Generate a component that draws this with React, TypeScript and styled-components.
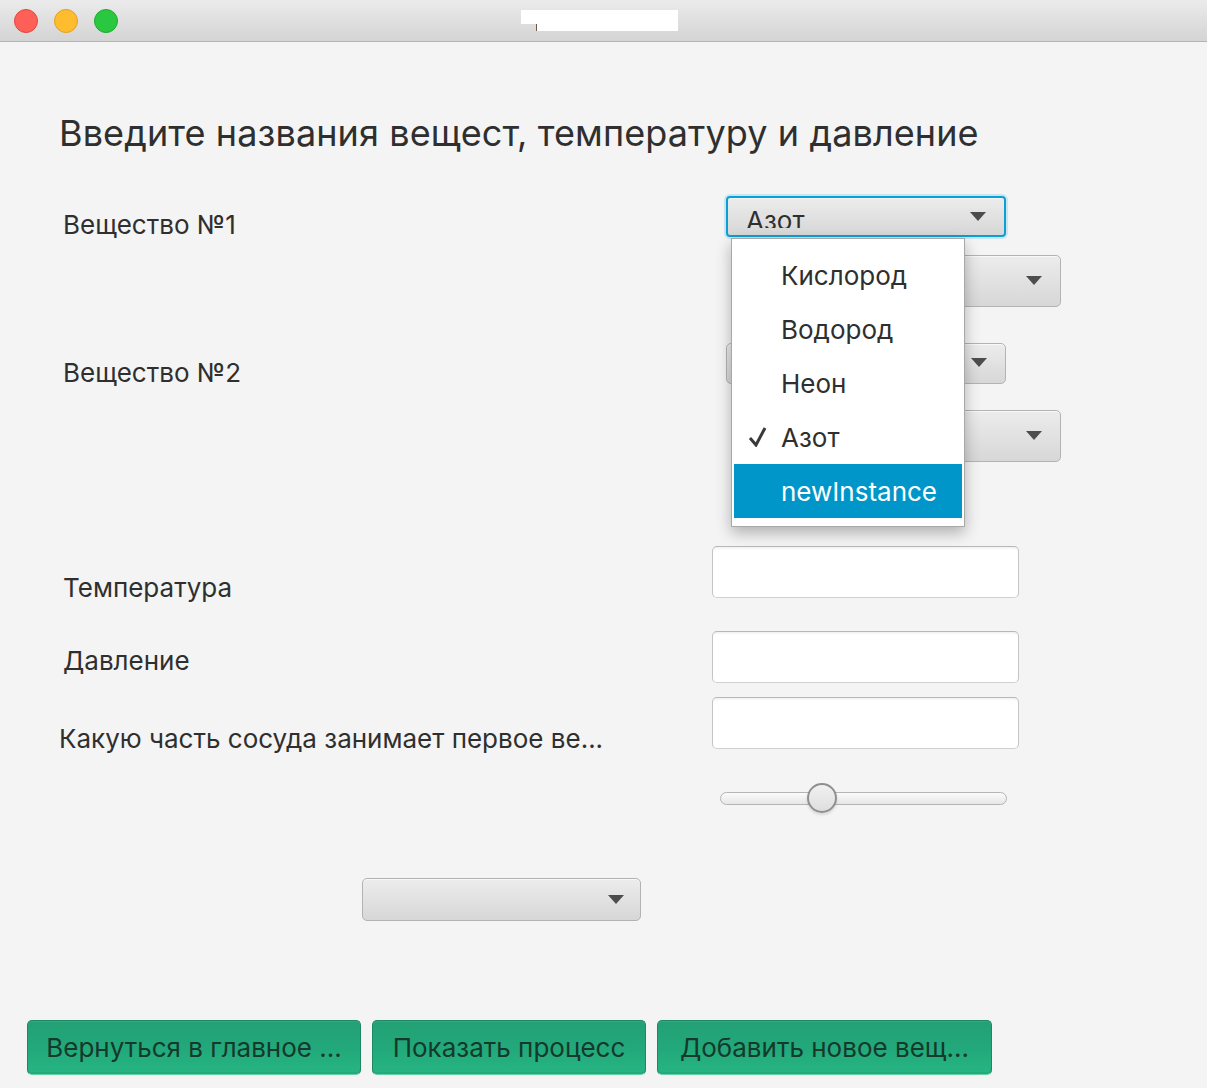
import React from "react";
import styled, { createGlobalStyle, css } from "styled-components";

const Global = createGlobalStyle`
  html, body { margin: 0; padding: 0; background: #f4f4f4; }
  body { font-family: Inter, "Noto Sans", "Liberation Sans", sans-serif; color: #333; }
  * { box-sizing: border-box; }
`;

const Window = styled.div`
  width: 1207px;
  height: 1088px;
  display: flex;
  flex-direction: column;
  background: #f4f4f4;
  overflow: hidden;
`;

const TitleBar = styled.div`
  height: 42px;
  flex: none;
  display: flex;
  align-items: center;
  padding-left: 14px;
  gap: 16px;
  background: linear-gradient(#ebebeb, #d4d4d4);
  border-bottom: 1px solid #b4b4b4;
  position: relative;
`;

const Light = styled.span<{ $c: string; $b: string }>`
  width: 24px;
  height: 24px;
  border-radius: 50%;
  background: ${(p) => p.$c};
  border: 1px solid ${(p) => p.$b};
`;

const TitleMask = styled.div`
  position: absolute;
  left: 536px;
  top: 10px;
  width: 142px;
  height: 21px;
  background: #fff;
  &::before {
    content: "";
    position: absolute;
    left: -15px;
    top: 0;
    width: 15px;
    height: 14px;
    background: #fff;
  }
  &::after {
    content: "";
    position: absolute;
    left: 0;
    top: 14px;
    width: 1px;
    height: 7px;
    background: #6b5a4a;
  }
`;

const Content = styled.div`
  flex: 1;
  display: flex;
  flex-direction: column;
  padding-left: 59px;
  position: relative;
`;

const Heading = styled.h1`
  margin: 69px 0 0 0;
  font-size: 36px;
  line-height: 44px;
  font-weight: 400;
  color: #2f2f2f;
  letter-spacing: 0.1px;
`;

const Row = styled.div<{ $gap: number }>`
  display: flex;
  align-items: flex-start;
  margin-top: ${(p) => p.$gap}px;
`;

const Label = styled.div<{ $top: number; $shift?: number }>`
  width: 653px;
  flex: none;
  padding-top: ${(p) => p.$top}px;
  padding-left: ${(p) => p.$shift ?? 4}px;
  font-size: 26px;
  line-height: 30px;
  color: #2f2f2f;
  white-space: nowrap;
`;

const Stack = styled.div<{ $gap: number }>`
  display: flex;
  flex-direction: column;
  align-items: flex-start;
  gap: ${(p) => p.$gap}px;
  position: relative;
`;

const comboBase = css`
  display: flex;
  align-items: flex-start;
  justify-content: space-between;
  border-radius: 5px;
  background: linear-gradient(#ececec, #d7d7d7);
  border: 1px solid #b3b3b3;
  box-shadow: inset 0 1px 0 #f8f8f8;
  position: relative;
  overflow: hidden;
`;

const Combo = styled.div<{ $w: number; $h: number; $indent?: number; $focused?: boolean }>`
  ${comboBase};
  width: ${(p) => p.$w}px;
  height: ${(p) => p.$h}px;
  margin-left: ${(p) => p.$indent ?? 0}px;
  padding-right: 18px;
  ${(p) =>
    p.$focused &&
    css`
      border: 2px solid #0aa0d6;
      box-shadow: 0 0 0 2px rgba(10, 160, 214, 0.18), inset 0 1px 0 #f3f3f3;
      border-radius: 4px;
    `}
`;

const ComboValue = styled.span`
  display: block;
  height: 28px;
  overflow: hidden;
  padding-left: 18px;
  margin-top: 2px;
  font-size: 26px;
  line-height: 42px;
  color: #2f2f2f;
`;

const Arrow = styled.span<{ $mt: number }>`
  width: 0;
  height: 0;
  margin-top: ${(p) => p.$mt}px;
  margin-left: auto;
  border-left: 8px solid transparent;
  border-right: 8px solid transparent;
  border-top: 9px solid #4d4d4d;
`;

const Popup = styled.div`
  position: absolute;
  left: 19px;
  top: 42px;
  width: 234px;
  padding: 9px 2px 8px 2px;
  background: #fff;
  border: 1px solid #a8a8a8;
  box-shadow: 0 6px 14px rgba(0, 0, 0, 0.28);
  z-index: 5;
  display: flex;
  flex-direction: column;
`;

const Item = styled.div<{ $active?: boolean }>`
  height: 54px;
  display: flex;
  align-items: center;
  padding-left: 47px;
  position: relative;
  font-size: 26px;
  color: ${(p) => (p.$active ? "#ffffff" : "#2f2f2f")};
  background: ${(p) => (p.$active ? "#0096c9" : "transparent")};
`;

const Check = styled.svg`
  position: absolute;
  left: 14px;
  top: 17px;
`;

const Field = styled.div`
  width: 307px;
  height: 52px;
  background: #fff;
  border: 1px solid #c4c4c4;
  border-top-color: #b8b8b8;
  border-bottom-color: #d0d0d0;
  border-radius: 5px;
  box-shadow: inset 0 3px 3px -2px rgba(0, 0, 0, 0.08);
`;

const SliderBox = styled.div`
  width: 287px;
  height: 30px;
  margin-left: 8px;
  display: flex;
  align-items: center;
  position: relative;
`;

const Track = styled.div`
  width: 100%;
  height: 13px;
  border-radius: 7px;
  border: 1px solid #b4b4b4;
  background: linear-gradient(#fbfbfb, #e6e6e6);
`;

const Thumb = styled.div`
  position: absolute;
  left: 87px;
  top: 0;
  width: 30px;
  height: 30px;
  border-radius: 50%;
  border: 2px solid #8f8f8f;
  background: linear-gradient(#f1f1f1, #dedede);
  box-shadow: 0 2px 3px rgba(0, 0, 0, 0.12);
`;

const BottomCombo = styled.div`
  ${comboBase};
  width: 279px;
  height: 43px;
  margin-top: 65px;
  margin-left: 303px;
  padding-right: 16px;
  align-items: center;
`;

const Buttons = styled.div`
  display: flex;
  gap: 11px;
  margin-top: 99px;
  margin-left: -32px;
`;

const GreenButton = styled.button<{ $w: number }>`
  width: ${(p) => p.$w}px;
  height: 55px;
  border-radius: 5px;
  border: 1px solid #1d8862;
  border-bottom-color: #64d0a6;
  background: linear-gradient(#23a075, #22a97b 55%, #27b584);
  box-shadow: inset 0 1px 0 rgba(255, 255, 255, 0.08), inset 0 -2px 0 rgba(0, 0, 0, 0.06);
  font-family: Inter, "Noto Sans", "Liberation Sans", sans-serif;
  font-size: 26px;
  color: #15392b;
  padding: 0;
  white-space: nowrap;
  display: flex;
  align-items: center;
  justify-content: center;
`;

const items = ["Кислород", "Водород", "Неон", "Азот", "newInstance"];

export default function App() {
  return (
    <Window>
      <Global />
      <TitleBar>
        <Light $c="#fe5f57" $b="#e2463f" />
        <Light $c="#febc2e" $b="#e0a125" />
        <Light $c="#29c840" $b="#1ea930" />
        <TitleMask />
      </TitleBar>
      <Content>
        <Heading>Введите названия вещест, температуру и давление</Heading>

        <Row $gap={41}>
          <Label $top={14}>Вещество №1</Label>
          <Stack $gap={18}>
            <Combo $w={280} $h={41} $indent={14} $focused>
              <ComboValue>Азот</ComboValue>
              <Arrow $mt={14} />
            </Combo>
            <Combo $w={321} $h={52} $indent={28}>
              <Arrow $mt={20} />
            </Combo>
            <Popup>
              {items.map((it) => (
                <Item key={it} $active={it === "newInstance"}>
                  {it === "Азот" && (
                    <Check width="20" height="20" viewBox="0 0 20 20">
                      <path d="M2 11 L8 18 L17 1" fill="none" stroke="#3a3a3a" strokeWidth="3" />
                    </Check>
                  )}
                  {it}
                </Item>
              ))}
            </Popup>
          </Stack>
        </Row>

        <Row $gap={36}>
          <Label $top={15}>Вещество №2</Label>
          <Stack $gap={26}>
            <Combo $w={280} $h={41} $indent={14}>
              <Arrow $mt={14} />
            </Combo>
            <Combo $w={321} $h={52} $indent={28}>
              <Arrow $mt={20} />
            </Combo>
          </Stack>
        </Row>

        <Row $gap={84}>
          <Label $top={27}>Температура</Label>
          <Field />
        </Row>

        <Row $gap={28}>
          <Label $top={15}>Давление</Label>
          <Field />
        </Row>

        <Row $gap={14}>
          <Label $top={27} $shift={0}>Какую часть сосуда занимает первое ве...</Label>
          <Field />
        </Row>

        <Row $gap={29}>
          <Label $top={0} />
          <SliderBox>
            <Track />
            <Thumb />
          </SliderBox>
        </Row>

        <BottomCombo>
          <Arrow $mt={0} />
        </BottomCombo>

        <Buttons>
          <GreenButton $w={334}>Вернуться в главное ...</GreenButton>
          <GreenButton $w={274}>Показать процесс</GreenButton>
          <GreenButton $w={335}>Добавить новое вещ...</GreenButton>
        </Buttons>
      </Content>
    </Window>
  );
}
